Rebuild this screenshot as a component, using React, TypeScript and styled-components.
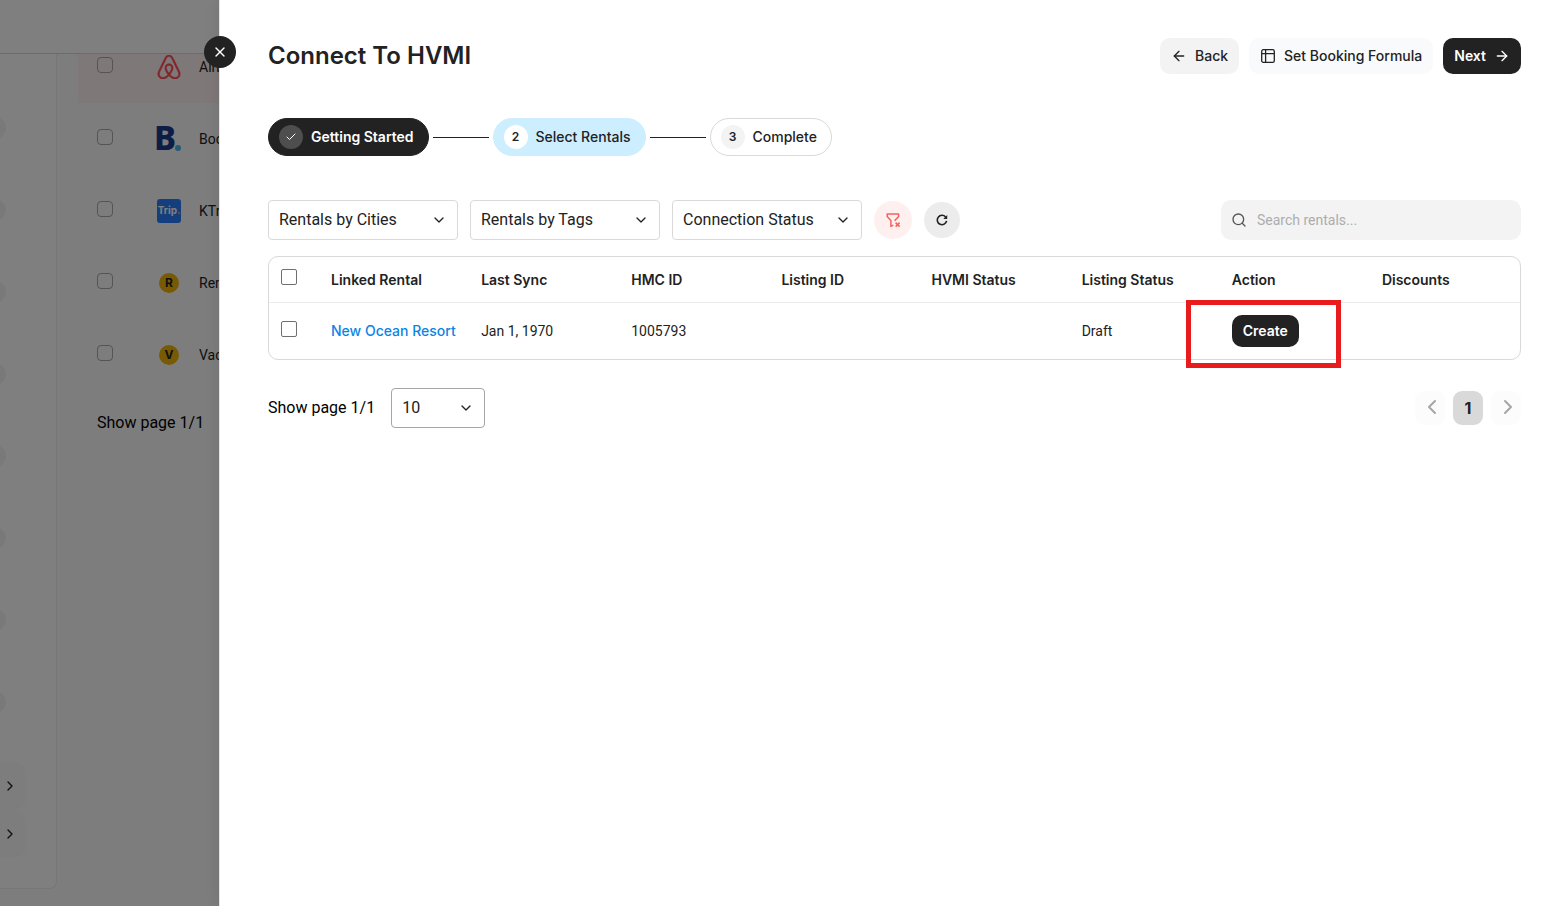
import React from 'react';
import styled, { createGlobalStyle, css } from 'styled-components';
import { ArrowLeft, ArrowRight, Check, ChevronDown, ChevronLeft, ChevronRight, Search, X } from 'lucide-react';
import { SiAirbnb } from 'react-icons/si';

const ink = '#222222';
const textFont = `Roboto, 'Liberation Sans', sans-serif`;
const uiFont = `Inter, 'Liberation Sans', sans-serif`;

const GlobalStyle = createGlobalStyle`
  *, *::before, *::after { box-sizing: border-box; }
  body { margin: 0; color: ${ink}; font: 400 14px/20px ${textFont}; }
  button, input, select { font: inherit; color: inherit; }
  button { border: 0; padding: 0; cursor: pointer; }
`;

const Page = styled.div`
  position: relative;
  min-height: 100vh;
  overflow: hidden;
  display: flex;
`;

/* Channel list behind the drawer */
const Backdrop = styled.div`
  position: absolute;
  inset: 0;
  display: flex;
  flex-direction: column;
  background: #fafafa;
  &::after {
    content: '';
    position: absolute;
    inset: 0;
    z-index: 2;
    background: rgba(0, 0, 0, 0.5);
  }
`;

const TopBar = styled.div`
  position: relative;
  z-index: 1;
  flex: 0 0 54px;
  background: #ffffff;
  border-bottom: 1px solid #d9d9d9;
`;

const BackdropBody = styled.div`
  flex: 1;
  display: flex;
  align-items: stretch;
`;

const SideCard = styled.aside`
  width: 57px;
  flex: none;
  margin-bottom: 17px;
  padding-top: 33px;
  overflow: hidden;
  background: #ffffff;
  border: 1px solid #ececec;
  border-width: 0 1px 1px 0;
  border-bottom-right-radius: 8px;
`;

const SideItem = styled.div`
  height: 82px;
  display: flex;
  align-items: center;
  &::before {
    content: '';
    width: 22px;
    height: 22px;
    margin-left: -16px;
    border-radius: 50%;
    background: #f3f3f3;
  }
`;

const SideLinks = styled.div`
  margin-top: 19px;
`;

const SideLink = styled.button`
  width: 26px;
  height: 48px;
  display: flex;
  align-items: center;
  padding-left: 2px;
  background: #fbfbfb;
  border-radius: 0 12px 12px 0;
`;

const Channels = styled.main`
  flex: 1;
  margin: -23px 0 0 21px;
`;

const ChannelRow = styled.label<{ $alert?: boolean }>`
  height: 72px;
  display: flex;
  align-items: center;
  padding-left: 19px;
  background: ${(p) => (p.$alert ? '#fff0f0' : 'transparent')};
`;

const Checkbox = styled.input.attrs({ type: 'checkbox' })<{ $soft?: boolean }>`
  appearance: none;
  display: block;
  width: 16px;
  height: 16px;
  margin: 0;
  background: #ffffff;
  border: 1px solid #6f6f6f;
  border-radius: 2px;
  ${(p) =>
    p.$soft &&
    css`
      margin: 0 44px 4px 0;
      background: transparent;
      border-color: #a8a8a8;
      border-radius: 4px;
    `}
`;

const LogoBox = styled.span`
  width: 24px;
  height: 24px;
  margin-right: 18px;
  display: flex;
  align-items: center;
  justify-content: center;
  svg { flex: none; }
`;

const TripLogo = styled.span`
  width: 24px;
  height: 24px;
  border-radius: 3px;
  background: #287dfa;
  color: #ffffff;
  font: 700 10px/23px ${uiFont};
  text-align: center;
  i { color: #ffb400; font-style: normal; }
`;

const InitialLogo = styled.span`
  width: 20px;
  height: 20px;
  border-radius: 50%;
  background: #f1b50a;
  font: 700 12px/20px ${uiFont};
  text-align: center;
`;

const BackdropFooter = styled.p`
  margin: 22px 0 0 19px;
  font-size: 16px;
  line-height: 20px;
  color: #000000;
`;

/* Drawer */
const Drawer = styled.section`
  position: relative;
  z-index: 3;
  flex: 1;
  min-width: 0;
  margin-left: 219px;
  padding: 38px 47px 38px 48px;
  background: #ffffff;
  border-left: 1px solid #e4e4e4;
  box-shadow: -2px 0 12px rgba(0, 0, 0, 0.08);
`;

const CloseButton = styled.button`
  position: absolute;
  top: 36px;
  left: -16px;
  width: 32px;
  height: 32px;
  display: flex;
  align-items: center;
  justify-content: center;
  border-radius: 50%;
  background: ${ink};
  color: #ffffff;
`;

const Header = styled.header`
  display: flex;
  align-items: center;
  justify-content: space-between;
`;

const Title = styled.h1`
  margin: 0;
  font: 600 24px/36px ${uiFont};
`;

const Actions = styled.div`
  display: flex;
  gap: 10px;
`;

const Button = styled.button<{ $tone: 'dark' | 'grey' | 'pale'; $small?: boolean }>`
  height: ${(p) => (p.$small ? 32 : 36)}px;
  padding: 0 11px;
  display: inline-flex;
  align-items: center;
  gap: 8px;
  border-radius: 10px;
  font: ${(p) => (p.$tone === 'dark' ? 600 : 500)} 14px/20px ${uiFont};
  white-space: nowrap;
  background: ${(p) => ({ dark: ink, grey: '#f3f3f3', pale: '#f9fafc' })[p.$tone]};
  color: ${(p) => (p.$tone === 'dark' ? '#ffffff' : ink)};
`;

const Steps = styled.ol`
  display: flex;
  align-items: center;
  margin: 44px 0;
  padding: 0;
  list-style: none;
`;

type StepState = 'done' | 'current' | 'todo';
const stepColors = {
  done: { fill: ink, line: ink, text: '#ffffff', dot: '#4e4e4e' },
  current: { fill: '#cceeff', line: '#cceeff', text: ink, dot: '#ffffff' },
  todo: { fill: '#ffffff', line: '#d9d9d9', text: ink, dot: '#f3f3f3' },
};

const Step = styled.li<{ $state: StepState }>`
  height: 38px;
  display: flex;
  align-items: center;
  gap: 8px;
  padding: 0 14px 0 10px;
  border: 1px solid ${(p) => stepColors[p.$state].line};
  border-radius: 19px;
  background: ${(p) => stepColors[p.$state].fill};
  color: ${(p) => stepColors[p.$state].text};
  font: ${(p) => (p.$state === 'done' ? 600 : 500)} 14px/20px ${uiFont};
`;

const StepDot = styled.span<{ $state: StepState }>`
  width: 24px;
  height: 24px;
  display: flex;
  align-items: center;
  justify-content: center;
  border-radius: 50%;
  background: ${(p) => stepColors[p.$state].dot};
  font-size: 12px;
  font-weight: 600;
`;

const StepLine = styled.li`
  width: 56px;
  height: 1px;
  margin: 0 4px;
  background: ${ink};
`;

const Filters = styled.div`
  display: flex;
  align-items: center;
  gap: 12px;
  margin-bottom: 16px;
`;

const SelectWrap = styled.div<{ $compact?: boolean }>`
  width: ${(p) => (p.$compact ? 94 : 190)}px;
  height: 40px;
  display: grid;
  align-items: center;
  select {
    grid-area: 1 / 1;
    appearance: none;
    width: 100%;
    height: 100%;
    padding: 0 32px 0 10px;
    background: #ffffff;
    border: 1px solid ${(p) => (p.$compact ? '#a6a6a6' : '#d9d9d9')};
    border-radius: 4px;
    font-size: 16px;
  }
  svg {
    grid-area: 1 / 1;
    justify-self: end;
    margin-right: 11px;
    pointer-events: none;
  }
`;

const RoundButton = styled.button<{ $danger?: boolean }>`
  width: ${(p) => (p.$danger ? 38 : 36)}px;
  height: ${(p) => (p.$danger ? 38 : 36)}px;
  display: flex;
  align-items: center;
  justify-content: center;
  border-radius: 50%;
  background: ${(p) => (p.$danger ? '#fff0f0' : '#ececec')};
  color: ${(p) => (p.$danger ? '#f4635e' : ink)};
`;

const SearchField = styled.label`
  width: 300px;
  height: 40px;
  margin-left: auto;
  display: flex;
  align-items: center;
  gap: 10px;
  padding: 0 10px;
  border-radius: 10px;
  background: #f3f3f3;
  color: #555555;
  input {
    flex: 1;
    min-width: 0;
    padding: 0;
    border: 0;
    outline: 0;
    background: transparent;
  }
  input::placeholder { color: #adadad; }
`;

const TableFrame = styled.div`
  border: 1px solid #d9d9d9;
  border-radius: 10px;
`;

const Table = styled.table`
  width: 100%;
  table-layout: fixed;
  border-collapse: separate;
  border-spacing: 0;
  th, td { padding: 0 12px; text-align: left; white-space: nowrap; }
  th { height: 46px; border-bottom: 1px solid #ececec; font: 600 14px/20px ${uiFont}; }
  td { height: 56px; }
  th:first-child, td:first-child { width: 50px; padding-bottom: 5px; }
`;

const RentalLink = styled.a`
  font: 500 14px/20px ${uiFont};
  color: #0a85e6;
  text-decoration: none;
`;

const Highlight = styled.div`
  position: relative;
  display: inline-flex;
  vertical-align: middle;
  &::after {
    content: '';
    position: absolute;
    inset: -15px -42px -21px -46px;
    border: 5px solid #e81c1c;
    pointer-events: none;
  }
`;

const Footer = styled.footer`
  display: flex;
  align-items: center;
  margin-top: 28px;
`;

const PageInfo = styled.label`
  margin-right: 16px;
  font-size: 16px;
  line-height: 20px;
  color: #000000;
`;

const Pager = styled.nav`
  margin-left: auto;
  display: flex;
  gap: 8px;
`;

const PageButton = styled.button<{ $active?: boolean }>`
  width: 30px;
  height: 34px;
  display: flex;
  align-items: center;
  justify-content: center;
  padding: ${(p) => (p.$active ? '0' : '0 0 2px 4px')};
  border-radius: 9px;
  background: ${(p) => (p.$active ? '#d9d9d9' : '#fcfcfc')};
  color: ${(p) => (p.$active ? ink : '#a6a6a6')};
  font: 700 16px/20px ${uiFont};
  svg { flex: none; }
`;

const BookingLogo = () => (
  <svg width="32" height="48" viewBox="0 0 32 48" aria-hidden="true">
    <text x="1" y="35" fontFamily="Noto Sans, sans-serif" fontWeight="800" fontSize="33" fill="#1b3a8c">B</text>
    <circle cx="25" cy="33" r="3" fill="#4fb6ea" />
  </svg>
);

const LayoutIcon = () => (
  <svg width="16" height="16" viewBox="0 0 16 16" fill="none" stroke="currentColor" strokeWidth="1.3" aria-hidden="true">
    <rect x="1.7" y="1.7" width="12.6" height="12.6" rx="1.6" />
    <path d="M1.7 5.6h12.6M5.6 1.7v12.6" />
  </svg>
);

const ClearFilterIcon = () => (
  <svg width="16" height="16" viewBox="0 0 16 16" fill="none" stroke="currentColor" strokeWidth="1.5" strokeLinejoin="round" aria-hidden="true">
    <path d="M8.3 13.2 5.9 14.4V8.6L2.2 4.6V2h11.4v2.6L10.2 8v1" />
    <path d="m10.6 10.6 4 4m0-4-4 4" />
  </svg>
);

const RefreshIcon = () => (
  <svg width="14" height="14" viewBox="0 0 14 14" fill="none" stroke="currentColor" strokeWidth="1.6" aria-hidden="true">
    <path d="M11.6 7.8A4.7 4.7 0 1 1 10.6 4" />
    <path d="M12.2 2v3.9H8.3z" fill="currentColor" stroke="none" />
  </svg>
);

const columns = ['Linked Rental', 'Last Sync', 'HMC ID', 'Listing ID', 'HVMI Status', 'Listing Status', 'Action', 'Discounts'];
const filters = ['Rentals by Cities', 'Rentals by Tags', 'Connection Status'];
const steps: { label: string; state: StepState }[] = [
  { label: 'Getting Started', state: 'done' },
  { label: 'Select Rentals', state: 'current' },
  { label: 'Complete', state: 'todo' },
];
const channels = [
  { name: 'Airbnb', logo: <SiAirbnb size={24} color="#ff4a50" stroke="#ff4a50" strokeWidth={0.6} />, alert: true },
  { name: 'Booking.com', logo: <BookingLogo /> },
  { name: 'KTrip', logo: <TripLogo>Trip<i>.</i></TripLogo> },
  { name: 'Rentals', logo: <InitialLogo>R</InitialLogo> },
  { name: 'Vacations', logo: <InitialLogo>V</InitialLogo> },
];

export default function App() {
  return (
    <Page>
      <GlobalStyle />
      <Backdrop>
        <TopBar />
        <BackdropBody>
          <SideCard>
            {Array.from({ length: 8 }, (_, i) => <SideItem key={i} />)}
            <SideLinks>
              <SideLink aria-label="Open first section"><ChevronRight size={16} /></SideLink>
              <SideLink aria-label="Open second section"><ChevronRight size={16} /></SideLink>
            </SideLinks>
          </SideCard>
          <Channels>
            {channels.map((c) => (
              <ChannelRow key={c.name} $alert={c.alert}>
                <Checkbox $soft />
                <LogoBox>{c.logo}</LogoBox>
                {c.name}
              </ChannelRow>
            ))}
            <BackdropFooter>Show page 1/1</BackdropFooter>
          </Channels>
        </BackdropBody>
      </Backdrop>

      <Drawer>
        <CloseButton aria-label="Close"><X size={16} strokeWidth={2} /></CloseButton>
        <Header>
          <Title>Connect To HVMI</Title>
          <Actions>
            <Button $tone="grey"><ArrowLeft size={16} />Back</Button>
            <Button $tone="pale"><LayoutIcon />Set Booking Formula</Button>
            <Button $tone="dark">Next<ArrowRight size={16} /></Button>
          </Actions>
        </Header>

        <Steps>
          {steps.map((s, i) => (
            <React.Fragment key={s.label}>
              {i > 0 && <StepLine aria-hidden="true" />}
              <Step $state={s.state}>
                <StepDot $state={s.state}>{s.state === 'done' ? <Check size={12} /> : i + 1}</StepDot>
                {s.label}
              </Step>
            </React.Fragment>
          ))}
        </Steps>

        <Filters>
          {filters.map((f) => (
            <SelectWrap key={f}>
              <select aria-label={f}><option>{f}</option></select>
              <ChevronDown size={16} />
            </SelectWrap>
          ))}
          <RoundButton $danger aria-label="Clear filters"><ClearFilterIcon /></RoundButton>
          <RoundButton aria-label="Refresh"><RefreshIcon /></RoundButton>
          <SearchField>
            <Search size={16} />
            <input type="search" aria-label="Search rentals" placeholder="Search rentals..." />
          </SearchField>
        </Filters>

        <TableFrame>
          <Table>
            <thead>
              <tr>
                <th><Checkbox aria-label="Select all rentals" /></th>
                {columns.map((c) => <th key={c}>{c}</th>)}
              </tr>
            </thead>
            <tbody>
              <tr>
                <td><Checkbox aria-label="Select New Ocean Resort" /></td>
                <td><RentalLink href="#">New Ocean Resort</RentalLink></td>
                <td>Jan 1, 1970</td>
                <td>1005793</td>
                <td />
                <td />
                <td>Draft</td>
                <td><Highlight><Button $tone="dark" $small>Create</Button></Highlight></td>
                <td />
              </tr>
            </tbody>
          </Table>
        </TableFrame>

        <Footer>
          <PageInfo htmlFor="page-size">Show page 1/1</PageInfo>
          <SelectWrap $compact>
            <select id="page-size"><option>10</option></select>
            <ChevronDown size={16} />
          </SelectWrap>
          <Pager aria-label="Pagination">
            <PageButton aria-label="Previous page"><ChevronLeft size={24} /></PageButton>
            <PageButton $active>1</PageButton>
            <PageButton aria-label="Next page"><ChevronRight size={24} /></PageButton>
          </Pager>
        </Footer>
      </Drawer>
    </Page>
  );
}
